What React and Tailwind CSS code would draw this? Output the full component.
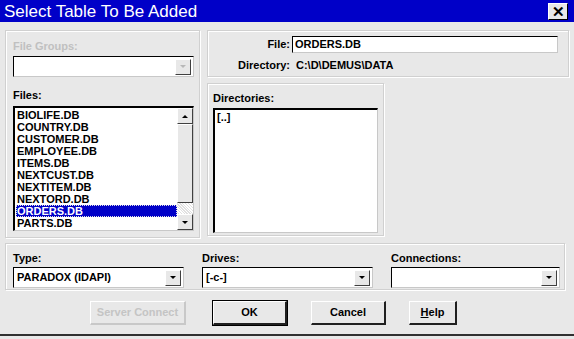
import React from 'react';

const font = { fontFamily: '"Liberation Sans", Arial, sans-serif' };

const files = [
  'BIOLIFE.DB',
  'COUNTRY.DB',
  'CUSTOMER.DB',
  'EMPLOYEE.DB',
  'ITEMS.DB',
  'NEXTCUST.DB',
  'NEXTITEM.DB',
  'NEXTORD.DB',
  'ORDERS.DB',
  'PARTS.DB',
];

const DownArrow = ({ disabled }) => (
  <div className="w-[16px] h-[16px] bg-[#e8e8e8] border-t border-l border-t-white border-l-white border-r border-b border-r-[#404040] border-b-[#404040] flex items-center justify-center">
    <div
      className={
        'w-0 h-0 border-l-[3px] border-r-[3px] border-t-[3px] border-l-transparent border-r-transparent ' +
        (disabled ? 'border-t-[#b8b8b8]' : 'border-t-black')
      }
    />
  </div>
);

const UpArrow = () => (
  <div className="w-0 h-0 border-l-[3px] border-r-[3px] border-b-[3px] border-l-transparent border-r-transparent border-b-black" />
);

const Combo = ({ value, width, disabled }) => (
  <div
    className={`h-[21px] ${width} bg-white border-t border-l border-black border-r border-b border-r-[#c8c8c8] border-b-[#c8c8c8] flex items-center justify-between pl-[3px] pr-[2px]`}
  >
    <span className="text-[11px] font-bold text-black">{value}</span>
    <DownArrow disabled={disabled} />
  </div>
);

const Group = ({ className, children }) => (
  <div className={`border border-[#d0d0d0] shadow-[inset_1px_1px_0_#ffffff,1px_1px_0_#ffffff] ${className}`}>
    {children}
  </div>
);

const Button = ({ children, width, disabled, def }) => (
  <button
    type="button"
    className={`${width} h-[24px] bg-[#e8e8e8] border-t border-l border-t-white border-l-white border-r-2 border-b-2 ${
      disabled ? 'border-r-[#c8c8c8] border-b-[#c8c8c8] text-[#c4c4c4]' : 'border-r-[#202020] border-b-[#202020] text-black'
    } ${def ? 'outline outline-1 outline-black' : ''} text-[11px] font-bold flex items-center justify-center`}
  >
    {children}
  </button>
);

export default function App() {
  return (
    <div style={font} className="w-[574px] h-[339px] bg-[#e8e8e8] overflow-hidden select-none">
      {/* title bar */}
      <div className="h-[22px] bg-[#0000c8] flex items-center justify-between pl-[4px] pr-[6px]">
        <span className="text-white text-[17px] leading-none">Select Table To Be Added</span>
        <div className="w-[20px] h-[17px] bg-[#e8e8e8] border-t border-l border-t-white border-l-white border-r border-b border-r-black border-b-black flex items-center justify-center text-[15px] font-bold leading-none text-black">
          ✕
        </div>
      </div>

      <div className="px-[5px] pt-[8px] h-[314px] border-b-2 border-b-[#303030]">
        <div className="flex gap-[7px]">
          {/* left side */}
          <Group className="w-[195px] h-[208px] pl-[7px] pt-[7px]">
            <div className="text-[11px] font-bold text-[#c0c0c0] h-[18px]">File Groups:</div>
            <Combo value="" width="w-[181px]" disabled />
            <div className="text-[11px] font-bold text-black mt-[10px] h-[19px]">Files:</div>
            <div className="w-[181px] h-[125px] bg-white border-t-2 border-l-2 border-black border-r border-b border-r-[#c8c8c8] border-b-[#c8c8c8] flex">
              <div className="flex-1 pt-[1px] pl-[1px]">
                {files.map((f) => (
                  <div
                    key={f}
                    className={
                      'h-[12px] leading-[12px] text-[11px] font-bold pl-[1px] ' +
                      (f === 'ORDERS.DB'
                        ? 'bg-[#0000c8] text-white outline outline-1 outline-dotted outline-[#e0e0e0] -outline-offset-1'
                        : 'text-black')
                    }
                  >
                    {f}
                  </div>
                ))}
              </div>
              <div className="w-[16px] flex flex-col bg-[#f0f0f0]">
                <div className="h-[16px] bg-[#e8e8e8] border-t border-l border-t-white border-l-white border-r border-b border-r-[#404040] border-b-[#404040] flex items-center justify-center">
                  <UpArrow />
                </div>
                <div className="h-[79px] bg-[#e8e8e8] border-t border-l border-t-white border-l-white border-r border-b border-r-[#404040] border-b-[#404040]" />
                <div className="flex-1 bg-[repeating-linear-gradient(45deg,#ffffff_0,#ffffff_1px,#e0e0e0_1px,#e0e0e0_2px)]" />
                <div className="h-[16px] bg-[#e8e8e8] border-t border-l border-t-white border-l-white border-r border-b border-r-[#404040] border-b-[#404040] flex items-center justify-center">
                  <div className="w-0 h-0 border-l-[3px] border-r-[3px] border-t-[3px] border-l-transparent border-r-transparent border-t-black" />
                </div>
              </div>
            </div>
          </Group>

          {/* right side */}
          <div className="w-[362px] flex flex-col gap-[6px]">
            <Group className="h-[47px] pt-[5px]">
              <div className="flex items-center h-[17px]">
                <div className="w-[84px] text-right text-[11px] font-bold text-black pr-[2px]">File:</div>
                <div className="w-[266px] h-[17px] bg-white border-t border-l border-black border-r border-b border-r-[#c8c8c8] border-b-[#c8c8c8] flex items-center pl-[2px] text-[11px] font-bold text-black">
                  ORDERS.DB
                </div>
              </div>
              <div className="flex items-center mt-[5px] h-[14px]">
                <div className="w-[84px] text-right text-[11px] font-bold text-black pr-[2px]">Directory:</div>
                <div className="pl-[4px] text-[11px] font-bold text-black">C:\D\DEMUS\DATA</div>
              </div>
            </Group>
            <Group className="w-[177px] h-[153px] pl-[5px] pt-[6px]">
              <div className="text-[11px] font-bold text-black h-[18px]">Directories:</div>
              <div className="w-[165px] h-[125px] bg-white border-t-2 border-l-2 border-black border-r border-b border-r-[#c8c8c8] border-b-[#c8c8c8] pl-[2px] pt-[1px] text-[11px] font-bold text-black leading-[12px]">
                [..]
              </div>
            </Group>
          </div>
        </div>

        {/* bottom group */}
        <Group className="w-[560px] h-[47px] mt-[5px] pl-[7px] pt-[6px]">
          <div className="flex gap-[18px]">
            <div className="flex flex-col">
              <div className="text-[11px] font-bold text-black h-[17px]">Type:</div>
              <Combo value="PARADOX (IDAPI)" width="w-[171px]" />
            </div>
            <div className="flex flex-col">
              <div className="text-[11px] font-bold text-black h-[17px]">Drives:</div>
              <Combo value="[-c-]" width="w-[171px]" />
            </div>
            <div className="flex flex-col">
              <div className="text-[11px] font-bold text-black h-[17px]">Connections:</div>
              <Combo value="" width="w-[169px]" />
            </div>
          </div>
        </Group>

        {/* buttons */}
        <div className="flex mt-[11px] pl-[85px]">
          <Button width="w-[96px]" disabled>
            Server Connect
          </Button>
          <div className="ml-[27px]">
            <Button width="w-[74px]" def>
              OK
            </Button>
          </div>
          <div className="ml-[24px]">
            <Button width="w-[75px]">Cancel</Button>
          </div>
          <div className="ml-[23px]">
            <Button width="w-[48px]">
              <span>
                <span className="underline">H</span>elp
              </span>
            </Button>
          </div>
        </div>
      </div>
    </div>
  );
}
